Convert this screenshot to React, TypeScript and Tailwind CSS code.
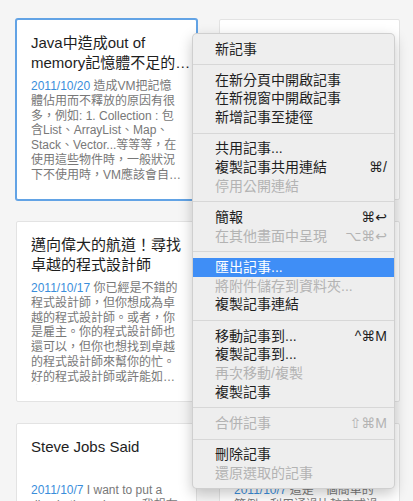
import React from "react";

type CardProps = {
  title: string;
  date: string;
  body: string;
  selected?: boolean;
};

const sans = '"Liberation Sans", "Noto Sans CJK TC", sans-serif';

function Card({ title, date, body, selected }: CardProps) {
  return (
    <div
      className={
        "h-[181px] w-[181px] rounded-[2px] bg-white px-[14px] pt-[13px] border " +
        (selected
          ? "border-[#62a3e5] shadow-[0_0_0_1px_#62a3e5]"
          : "border-[#e3e3e3]")
      }
      style={{ fontFamily: sans }}
    >
      <div className="-mr-[10px] h-[40px] text-[15px] leading-[20px] text-[#1e1e1e] line-clamp-2">
        {title}
      </div>
      <div className="mt-[6px] text-[12px] leading-[14.8px] text-[#787878] line-clamp-7">
        <span className="text-[#3a8edb]">{date}</span> {body}
      </div>
    </div>
  );
}

type Item = {
  label: string;
  shortcut?: string;
  disabled?: boolean;
  active?: boolean;
};

const groups: Item[][] = [
  [{ label: "新記事" }],
  [
    { label: "在新分頁中開啟記事" },
    { label: "在新視窗中開啟記事" },
    { label: "新增記事至捷徑" },
  ],
  [
    { label: "共用記事..." },
    { label: "複製記事共用連結", shortcut: "⌘/" },
    { label: "停用公開連結", disabled: true },
  ],
  [
    { label: "簡報", shortcut: "⌘↩" },
    { label: "在其他畫面中呈現", shortcut: "⌥⌘↩", disabled: true },
  ],
  [
    { label: "匯出記事...", active: true },
    { label: "將附件儲存到資料夾...", disabled: true },
    { label: "複製記事連結" },
  ],
  [
    { label: "移動記事到...", shortcut: "^⌘M" },
    { label: "複製記事到..." },
    { label: "再次移動/複製", disabled: true },
    { label: "複製記事" },
  ],
  [{ label: "合併記事", shortcut: "⇧⌘M", disabled: true }],
  [{ label: "刪除記事" }, { label: "還原選取的記事", disabled: true }],
];

function MenuRow({ item }: { item: Item }) {
  const color = item.active
    ? "bg-[#3f8ef6] text-white"
    : item.disabled
    ? "text-[#b3b3b3]"
    : "text-[#1f1f1f]";
  return (
    <div
      className={
        "flex h-[18.7px] items-center justify-between pl-[22px] pr-[7px] text-[14px] leading-[18.7px] " +
        color
      }
    >
      <span style={{ fontFamily: '"Liberation Sans", "Noto Sans CJK TC", sans-serif' }}>
        {item.label}
      </span>
      {item.shortcut && (
        <span
          className="text-[14px]"
          style={{ fontFamily: '"Liberation Sans", "DejaVu Sans", sans-serif' }}
        >
          {item.shortcut}
        </span>
      )}
    </div>
  );
}

function ContextMenu() {
  return (
    <div className="absolute left-[192px] top-[33px] w-[203px] rounded-[5px] border border-[rgba(0,0,0,0.13)] bg-[#eeeeee] py-[5.5px] shadow-[0_5px_14px_rgba(0,0,0,0.22)]">
      {groups.map((g, gi) => (
        <div key={gi}>
          {gi > 0 && <div className="my-[5.8px] h-px bg-[#d7d7d7]" />}
          {g.map((it, ii) => (
            <MenuRow key={ii} item={it} />
          ))}
        </div>
      ))}
    </div>
  );
}

export default function App() {
  return (
    <div className="relative h-[501px] w-[413px] overflow-hidden bg-[#f5f5f5]">
      <div className="grid grid-cols-[181px_181px] gap-x-[22px] gap-y-[21px] pl-[16px] pt-[19px]">
        <Card
          selected
          title="Java中造成out of memory記憶體不足的原因"
          date="2011/10/20"
          body="造成VM把記憶體佔用而不釋放的原因有很多，例如: 1. Collection : 包含List、ArrayList、Map、Stack、Vector...等等等，在使用這些物件時，一般狀況下不使用時，VM應該會自動回收記憶體空間。"
        />
        <Card
          title="iOS 開發筆記：記憶體管理"
          date="2011/10/21"
          body="在 iOS 開發中，記憶體管理是非常重要的一環，如果沒有正確釋放物件，很容易造成記憶體洩漏的問題。"
        />
        <Card
          title="邁向偉大的航道！尋找卓越的程式設計師"
          date="2011/10/17"
          body="你已經是不錯的程式設計師，但你想成為卓越的程式設計師。或者，你是雇主。你的程式設計師也還可以，但你也想找到卓越的程式設計師來幫你的忙。好的程式設計師或許能如期完成工作。"
        />
        <Card
          title="敏捷開發的十二個原則"
          date="2011/10/12"
          body="我們最優先的任務，是透過及早並持續地交付有價值的軟體來使客戶滿意。"
        />
        <Card
          title="Steve Jobs Said"
          date="2011/10/7"
          body="I want to put a ding in the universe. 我想在宇宙中留下痕跡。"
        />
        <Card
          title="排序演算法範例"
          date="2011/10/7"
          body="這是一個簡單的範例，利用通過比較方式過篩選資料，並依序排列。"
        />
      </div>
      <ContextMenu />
    </div>
  );
}
